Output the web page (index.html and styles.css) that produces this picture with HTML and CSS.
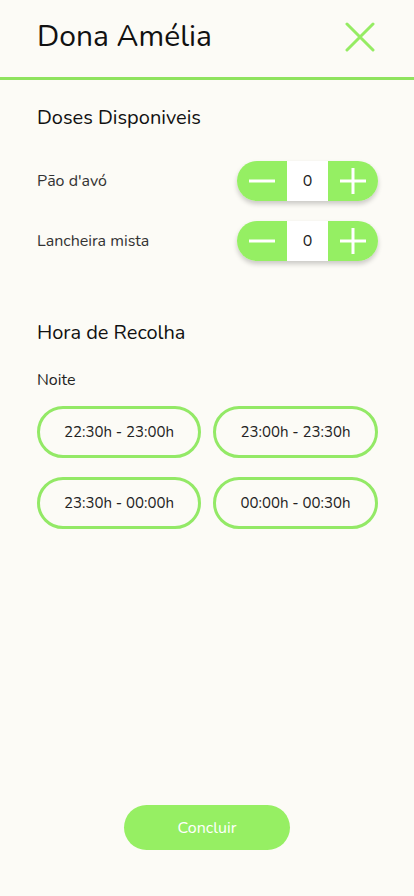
FILE: index.html
```html
<!DOCTYPE html>
<html lang="pt">
<head>
<meta charset="utf-8">
<title>Dona Amélia</title>
<link rel="stylesheet" href="styles.css">
</head>
<body>
<div class="screen">
  <header class="header">
    <h1 class="title">Dona Amélia</h1>
    <button class="close" aria-label="Fechar">
      <svg width="30" height="30" viewBox="0 0 30 30"><path d="M2 2 L28 28 M28 2 L2 28" stroke="#95ec63" stroke-width="3" stroke-linecap="round" fill="none"/></svg>
    </button>
  </header>
  <main class="content">
    <section class="section">
      <h2 class="section-title">Doses Disponiveis</h2>
      <div class="rows">
        <div class="row">
          <span class="label">Pão d'avó</span>
          <div class="stepper">
            <button class="step"><svg width="26" height="26" viewBox="0 0 26 26"><path d="M0 13 H26" stroke="#fff" stroke-width="3"/></svg></button>
            <span class="value">0</span>
            <button class="step"><svg width="26" height="26" viewBox="0 0 26 26"><path d="M0 13 H26 M13 0 V26" stroke="#fff" stroke-width="3"/></svg></button>
          </div>
        </div>
        <div class="row">
          <span class="label">Lancheira mista</span>
          <div class="stepper">
            <button class="step"><svg width="26" height="26" viewBox="0 0 26 26"><path d="M0 13 H26" stroke="#fff" stroke-width="3"/></svg></button>
            <span class="value">0</span>
            <button class="step"><svg width="26" height="26" viewBox="0 0 26 26"><path d="M0 13 H26 M13 0 V26" stroke="#fff" stroke-width="3"/></svg></button>
          </div>
        </div>
      </div>
    </section>
    <section class="section pickup">
      <h2 class="section-title">Hora de Recolha</h2>
      <p class="period">Noite</p>
      <div class="slots">
        <button class="slot">22:30h - 23:00h</button>
        <button class="slot">23:00h - 23:30h</button>
        <button class="slot">23:30h - 00:00h</button>
        <button class="slot">00:00h - 00:30h</button>
      </div>
    </section>
  </main>
  <footer class="footer">
    <button class="confirm">Concluir</button>
  </footer>
</div>
</body>
</html>
```

FILE: styles.css
```css
* { box-sizing: border-box; }
html, body { margin: 0; padding: 0; }
body {
  background: #fcfbf6;
  font-family: "Nunito", "Open Sans", "Noto Sans", sans-serif;
  color: #1a1a1a;
}
.screen {
  width: 414px;
  height: 896px;
  display: flex;
  flex-direction: column;
}
.header {
  height: 80px;
  border-bottom: 3px solid #8fe35e;
  display: flex;
  align-items: center;
  justify-content: space-between;
  padding: 0 39px 3px 37px;
}
.title {
  margin: 0;
  font-size: 30px;
  font-weight: 400;
  color: #111;
  line-height: 36px;
}
.close {
  background: none;
  border: 0;
  padding: 0;
  width: 30px;
  height: 30px;
  display: flex;
}
.content {
  flex: 1;
  padding: 23px 36px 0 37px;
}
.section-title {
  margin: 0;
  font-size: 20px;
  font-weight: 400;
  color: #111;
  line-height: 30px;
}
.rows {
  margin-top: 28px;
  display: flex;
  flex-direction: column;
  gap: 20px;
}
.row {
  display: flex;
  align-items: center;
  justify-content: space-between;
  height: 40px;
}
.label {
  font-size: 16px;
  color: #333;
}
.stepper {
  width: 141px;
  height: 40px;
  border-radius: 20px;
  display: flex;
  overflow: hidden;
  box-shadow: 0 3px 5px rgba(0,0,0,0.2);
}
.step {
  width: 50px;
  background: #95ef63;
  border: 0;
  padding: 0;
  display: flex;
  align-items: center;
  justify-content: center;
}
.value {
  flex: 1;
  background: #fff;
  display: flex;
  align-items: center;
  justify-content: center;
  font-size: 16px;
  color: #222;
}
.pickup {
  margin-top: 57px;
}
.period {
  margin: 22px 0 0;
  font-size: 16px;
  line-height: 20px;
  color: #222;
}
.slots {
  margin-top: 16px;
  display: grid;
  grid-template-columns: 164px 165px;
  column-gap: 12px;
  row-gap: 19px;
}
.slot {
  height: 52px;
  border: 3px solid #93e966;
  border-radius: 26px;
  background: transparent;
  font-family: inherit;
  font-size: 15px;
  color: #222;
  padding: 0;
}
.footer {
  display: flex;
  justify-content: center;
  padding: 0 0 46px 0;
}
.confirm {
  width: 166px;
  height: 45px;
  border: 0;
  border-radius: 23px;
  background: #96ef63;
  color: #fff;
  font-family: inherit;
  font-size: 16px;
}
```
